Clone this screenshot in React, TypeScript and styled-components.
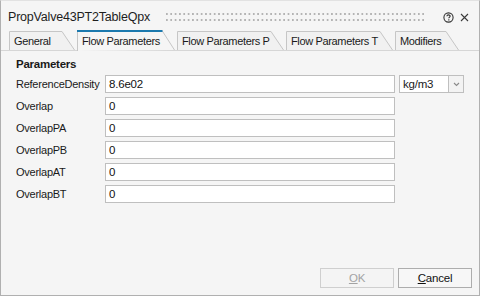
import React from "react";
import styled, { createGlobalStyle } from "styled-components";

const Global = createGlobalStyle`
  html, body { margin: 0; padding: 0; background: #f5f5f5; }
  body { font-family: "Liberation Sans", Arial, sans-serif; }
  * { box-sizing: border-box; }
`;

const Window = styled.div`
  width: 480px;
  height: 296px;
  display: flex;
  flex-direction: column;
  background: #f5f5f5;
  border: 1px solid #b0b0b0;
  border-top-color: #e2e2e2;
  color: #1a1a1a;
`;

const TitleBar = styled.div`
  height: 30px;
  display: flex;
  align-items: center;
  padding: 2px 8px 0 7px;
`;

const Title = styled.div`
  font-size: 12.5px;
  color: #1e1e1e;
  letter-spacing: -0.2px;
  white-space: nowrap;
`;

const Grip = styled.div`
  flex: 1;
  height: 8px;
  margin: 0 14px 0 16px;
  background-image: radial-gradient(circle at 1px 1px, #b4b4b4 0.9px, transparent 1.1px);
  background-size: 4.35px 6px;
`;

const IconBtn = styled.div`
  width: 13px;
  height: 13px;
  display: flex;
  align-items: center;
  justify-content: center;
  margin-left: 3px;
`;

const TabStrip = styled.div`
  height: 20px;
  display: flex;
  align-items: flex-end;
  gap: 2px;
  padding-left: 8px;
  border-bottom: 1px solid #d6d6d6;
`;

const Tab = styled.div<{ $width: number; $active?: boolean }>`
  position: relative;
  width: ${(p) => p.$width}px;
  height: ${(p) => (p.$active ? 21 : 19)}px;
  margin-bottom: ${(p) => (p.$active ? -1 : 0)}px;
  display: flex;
  align-items: center;
  padding: ${(p) => (p.$active ? "1px 0 0 5px" : "0 0 0 5px")};
  font-size: 11px;
  letter-spacing: -0.35px;
  color: #1a1a1a;
  white-space: nowrap;
`;

const TabShape = styled.svg`
  position: absolute;
  left: 0;
  top: 0;
  overflow: visible;
`;

const TabLabel = styled.span`
  position: relative;
`;

const Content = styled.div`
  flex: 1;
  padding: 7px 0 0 15px;
  display: flex;
  flex-direction: column;
`;

const Heading = styled.div`
  font-size: 11.5px;
  font-weight: bold;
  letter-spacing: -0.25px;
  height: 17px;
  color: #1a1a1a;
`;

const Form = styled.div`
  display: grid;
  grid-template-columns: 89px 290px auto;
  row-gap: 4px;
  align-items: center;
`;

const Label = styled.div`
  font-size: 11px;
  letter-spacing: -0.25px;
  color: #1a1a1a;
  grid-column: 1;
  white-space: nowrap;
`;

const Field = styled.div`
  grid-column: 2;
  height: 18px;
  background: #ffffff;
  border: 1px solid #bfbfbf;
  display: flex;
  align-items: center;
  padding-left: 3px;
  font-size: 11.5px;
  letter-spacing: -0.2px;
  color: #111;
`;

const Combo = styled.div`
  grid-column: 3;
  display: flex;
  height: 18px;
  margin-left: 4px;
`;

const ComboText = styled.div`
  width: 50px;
  background: #ffffff;
  border: 1px solid #bfbfbf;
  display: flex;
  align-items: center;
  padding-left: 3px;
  font-size: 11.5px;
  letter-spacing: -0.2px;
`;

const ComboButton = styled.div`
  width: 15px;
  background: #f3f3f3;
  border: 1px solid #bfbfbf;
  border-left: none;
  display: flex;
  align-items: center;
  justify-content: center;
`;

const Footer = styled.div`
  display: flex;
  justify-content: flex-end;
  gap: 4px;
  padding: 0 7px 7px 0;
`;

const Button = styled.div<{ $disabled?: boolean }>`
  width: 74px;
  height: 20px;
  display: flex;
  align-items: center;
  justify-content: center;
  font-size: 11.5px;
  letter-spacing: -0.2px;
  border: 1px solid ${(p) => (p.$disabled ? "#cfcfcf" : "#adadad")};
  background: ${(p) => (p.$disabled ? "#f4f4f4" : "#f7f7f7")};
  color: ${(p) => (p.$disabled ? "#a3a3a3" : "#111")};
  u { text-decoration-thickness: 1px; text-underline-offset: 1px; }
`;

type TabDef = { label: string; width: number; active?: boolean };

const tabs: TabDef[] = [
  { label: "General", width: 66 },
  { label: "Flow Parameters", width: 98, active: true },
  { label: "Flow Parameters P", width: 107 },
  { label: "Flow Parameters T", width: 107 },
  { label: "Modifiers", width: 64 },
];

const rows: { label: string; value: string; unit?: string }[] = [
  { label: "ReferenceDensity", value: "8.6e02", unit: "kg/m3" },
  { label: "Overlap", value: "0" },
  { label: "OverlapPA", value: "0" },
  { label: "OverlapPB", value: "0" },
  { label: "OverlapAT", value: "0" },
  { label: "OverlapBT", value: "0" },
];

function TabItem({ t }: { t: TabDef }) {
  const h = t.active ? 21 : 19;
  const w = t.width;
  const s = 13;
  return (
    <Tab $width={w} $active={t.active}>
      <TabShape width={w} height={h}>
        <path
          d={`M0.5 ${h} L0.5 0.5 L${w - s} 0.5 L${w - 0.5} ${h - (t.active ? 1 : 0)}`}
          fill={t.active ? "#f5f5f5" : "#f1f1f1"}
          stroke="#c6c6c6"
          strokeWidth={1}
        />
        {t.active && <rect x={0} y={0} width={w - s + 0.5} height={2} fill="#1b79ae" />}
      </TabShape>
      <TabLabel>{t.label}</TabLabel>
    </Tab>
  );
}

export default function App() {
  return (
    <>
      <Global />
      <Window>
        <TitleBar>
          <Title>PropValve43PT2TableQpx</Title>
          <Grip />
          <IconBtn>
            <svg width="11" height="11" viewBox="0 0 11 11">
              <circle cx="5.5" cy="5.5" r="4.6" fill="none" stroke="#333" strokeWidth="1.1" />
              <path
                d="M3.9 4.3 C3.9 3.3 4.6 2.9 5.5 2.9 C6.4 2.9 7.1 3.4 7.1 4.2 C7.1 5.1 5.8 5.2 5.8 6.3"
                fill="none"
                stroke="#333"
                strokeWidth="1.1"
              />
              <rect x="5.2" y="7.3" width="1.2" height="1.2" fill="#333" />
            </svg>
          </IconBtn>
          <IconBtn>
            <svg width="9" height="9" viewBox="0 0 9 9">
              <path d="M1 1 L8 8 M8 1 L1 8" stroke="#3a3a3a" strokeWidth="1.1" />
            </svg>
          </IconBtn>
        </TitleBar>
        <TabStrip>
          {tabs.map((t) => (
            <TabItem key={t.label} t={t} />
          ))}
        </TabStrip>
        <Content>
          <Heading>Parameters</Heading>
          <Form>
            {rows.map((r) => (
              <React.Fragment key={r.label}>
                <Label>{r.label}</Label>
                <Field>{r.value}</Field>
                {r.unit && (
                  <Combo>
                    <ComboText>{r.unit}</ComboText>
                    <ComboButton>
                      <svg width="7" height="5" viewBox="0 0 7 5">
                        <path d="M1 1 L3.5 3.5 L6 1" fill="none" stroke="#8a8a8a" strokeWidth="1.1" />
                      </svg>
                    </ComboButton>
                  </Combo>
                )}
              </React.Fragment>
            ))}
          </Form>
        </Content>
        <Footer>
          <Button $disabled>
            <span>
              <u>O</u>K
            </span>
          </Button>
          <Button>
            <span>
              <u>C</u>ancel
            </span>
          </Button>
        </Footer>
      </Window>
    </>
  );
}
